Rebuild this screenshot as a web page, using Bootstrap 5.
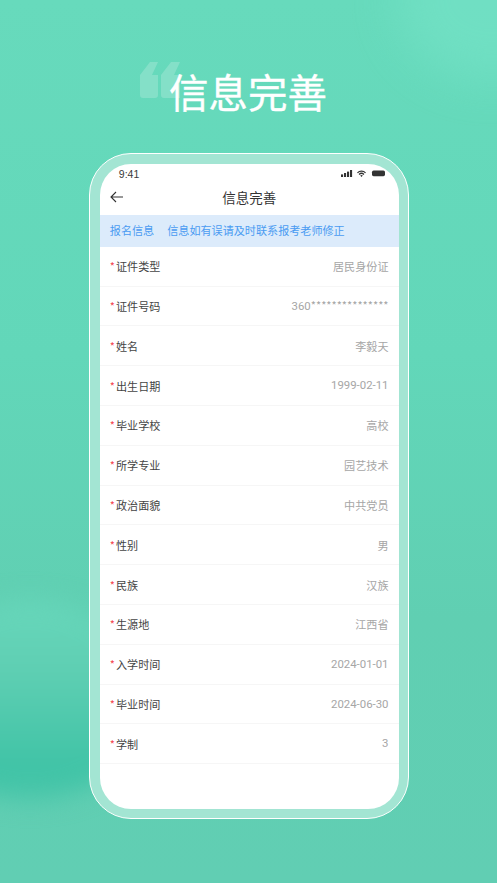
<!DOCTYPE html>
<html lang="zh">
<head>
<meta charset="utf-8">
<title>信息完善</title>
<link href="https://cdn.jsdelivr.net/npm/bootstrap@5.3.0/dist/css/bootstrap.min.css" rel="stylesheet">
<style>
html,body{height:100%;margin:0}
body{font-family:"Noto Sans CJK SC","Liberation Sans",sans-serif;background:#5fcfb2;overflow:hidden}
.stage{width:497px;height:883px;position:relative;overflow:hidden;padding-top:60px;
 background:linear-gradient(180deg,#67dabc 0%,#62d7b9 40%,#60cfb2 70%,#61ceb3 100%)}
.blob-top{position:absolute;right:-90px;top:-80px;width:190px;height:160px;border-radius:50%;background:#74e2c6;filter:blur(22px);opacity:.7}
.blob-left{position:absolute;left:-90px;top:600px;width:240px;height:200px;border-radius:50%;filter:blur(12px);
 background:linear-gradient(180deg,#68d7bb 0%,#5fcfb3 35%,#3fc3a6 85%,#4ac6aa 100%)}
.head-line{position:relative;height:62px;margin-bottom:31.3px}
.quote-mark{position:absolute;left:140px;top:2px;width:40px;height:36px;fill:#84e0c8}
.page-title{position:relative;margin:0;font-size:39.5px;line-height:62px;font-weight:400;-webkit-text-stroke:.35px #fff;color:#fff;text-align:center;padding-right:1px}
.phone{position:relative;width:319.4px;height:665.4px;margin-left:89.3px;padding:9.5px 9.2px 9.2px 9.5px;border:1.2px solid #fff;border-radius:42px;background:#a3e5d3}
.screen{height:100%;border-radius:31px;background:#fff;overflow:hidden;display:flex;flex-direction:column}
.status-row{height:19px;flex:none;padding:1px 14px 0 19px;font-family:"Liberation Sans",sans-serif;font-size:10.5px;color:#3a3a3a;line-height:14px}
.nav-row{height:32px;flex:none;padding:0 10px 3px}
.nav-title{font-size:13.5px;color:#333;line-height:28px;flex:1;text-align:center;padding-right:14px}
.notice{height:32px;padding:0 10px;background:#dcebfb;color:#4a9bf2;font-size:11.1px;gap:13px;flex:none}
.info-row{height:39.8px;padding:.5px 10px 0;border-bottom:1px solid #f6f6f6;font-size:11.1px;flex:none}
.info-label{color:#444}
.req{color:#f4474f;margin-right:1px}
.info-val{color:#a6a6a6}
.digits{font-family:Roboto,"Liberation Sans",sans-serif;font-size:11.4px}
</style>
</head>
<body>
<div class="stage">
  <div class="blob-top"></div>
  <div class="blob-left"></div>
  <div class="head-line">
    <svg class="quote-mark" viewBox="0 0 40 36"><path d="M10 0h8L12 13h6v20a3 3 0 0 1-3 3H3a3 3 0 0 1-3-3V13zM31 0h9l-6 13h6v23H24a3 3 0 0 1-3-3V13z"/></svg>
    <h1 class="page-title">信息完善</h1>
  </div>
  <div class="phone">
    <div class="screen">
      <div class="status-row d-flex justify-content-between align-items-center">
        <span>9:41</span>
        <svg width="44" height="7" viewBox="0 0 44 7" fill="#333">
          <rect x="0" y="4.4" width="2.1" height="2.6"/><rect x="3" y="3" width="2.1" height="4"/><rect x="6" y="1.6" width="2.1" height="5.4"/><rect x="9" y="0" width="2.1" height="7"/>
          <path d="M16 2.4a6.4 6.4 0 0 1 9 0l-.9.9a5.2 5.2 0 0 0-7.2 0zM17.6 4a4.1 4.1 0 0 1 5.8 0l-.9.9a2.9 2.9 0 0 0-4 0zM19.2 5.6a1.8 1.8 0 0 1 2.6 0L20.5 7z"/>
          <rect x="31" y="0.6" width="13" height="5.6" rx="1.6"/>
        </svg>
      </div>
      <div class="nav-row d-flex align-items-center">
        <svg width="14" height="12" viewBox="0 0 14 12" fill="none" stroke="#333" stroke-width="1.1"><path d="M13 6H1M6 1 1 6l5 5"/></svg>
        <div class="nav-title">信息完善</div>
      </div>
      <div class="notice d-flex align-items-center"><span>报名信息</span><span>信息如有误请及时联系报考老师修正</span></div>
      <div class="info-row d-flex justify-content-between align-items-center"><span class="info-label"><span class="req">*</span>证件类型</span><span class="info-val">居民身份证</span></div>
      <div class="info-row d-flex justify-content-between align-items-center"><span class="info-label"><span class="req">*</span>证件号码</span><span class="info-val"><span class="digits">360</span>***************</span></div>
      <div class="info-row d-flex justify-content-between align-items-center"><span class="info-label"><span class="req">*</span>姓名</span><span class="info-val">李毅天</span></div>
      <div class="info-row d-flex justify-content-between align-items-center"><span class="info-label"><span class="req">*</span>出生日期</span><span class="info-val digits">1999-02-11</span></div>
      <div class="info-row d-flex justify-content-between align-items-center"><span class="info-label"><span class="req">*</span>毕业学校</span><span class="info-val">高校</span></div>
      <div class="info-row d-flex justify-content-between align-items-center"><span class="info-label"><span class="req">*</span>所学专业</span><span class="info-val">园艺技术</span></div>
      <div class="info-row d-flex justify-content-between align-items-center"><span class="info-label"><span class="req">*</span>政治面貌</span><span class="info-val">中共党员</span></div>
      <div class="info-row d-flex justify-content-between align-items-center"><span class="info-label"><span class="req">*</span>性别</span><span class="info-val">男</span></div>
      <div class="info-row d-flex justify-content-between align-items-center"><span class="info-label"><span class="req">*</span>民族</span><span class="info-val">汉族</span></div>
      <div class="info-row d-flex justify-content-between align-items-center"><span class="info-label"><span class="req">*</span>生源地</span><span class="info-val">江西省</span></div>
      <div class="info-row d-flex justify-content-between align-items-center"><span class="info-label"><span class="req">*</span>入学时间</span><span class="info-val digits">2024-01-01</span></div>
      <div class="info-row d-flex justify-content-between align-items-center"><span class="info-label"><span class="req">*</span>毕业时间</span><span class="info-val digits">2024-06-30</span></div>
      <div class="info-row d-flex justify-content-between align-items-center"><span class="info-label"><span class="req">*</span>学制</span><span class="info-val digits">3</span></div>
    </div>
  </div>
</div>
<script src="https://cdn.jsdelivr.net/npm/bootstrap@5.3.0/dist/js/bootstrap.bundle.min.js"></script>
</body>
</html>
